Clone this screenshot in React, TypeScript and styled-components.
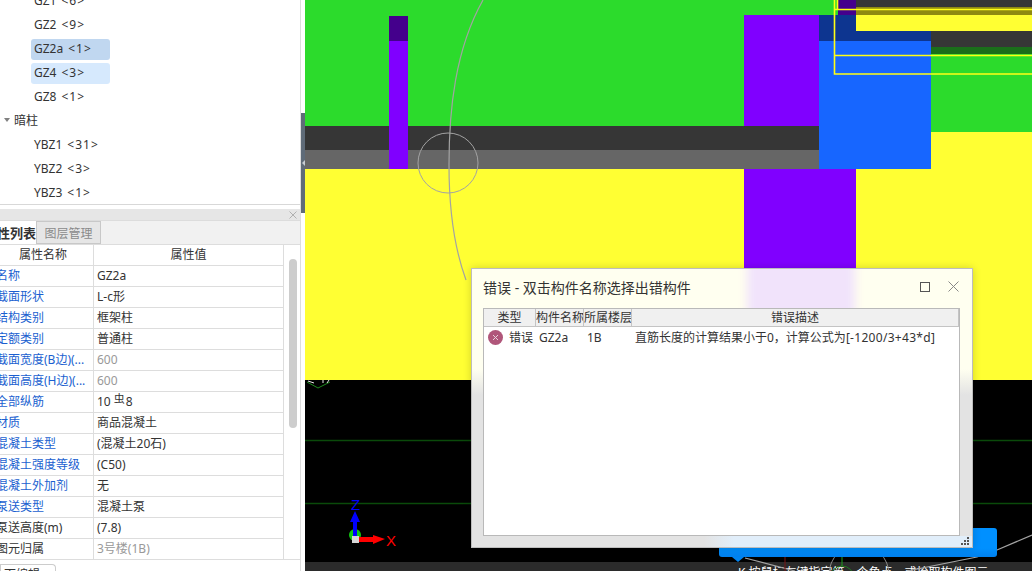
import React from "react";
import styled, { createGlobalStyle } from "styled-components";

const GlobalStyle = createGlobalStyle`
  html, body {
    margin: 0;
    padding: 0;
    background: #fff;
    overflow: hidden;
  }
`;

const Page = styled.div`
  position: relative;
  display: flex;
  width: 1032px;
  height: 571px;
  overflow: hidden;
  font-family: "Noto Sans", "Noto Sans CJK SC", sans-serif;
  font-size: 12px;
  color: #333;
`;

const LeftPanel = styled.div`
  display: flex;
  flex-direction: column;
  flex: none;
  width: 301px;
  border-right: 1px solid #ddd;
  box-sizing: border-box;
  overflow: hidden;
`;

const TreeBox = styled.div`
  flex: none;
  height: 205px;
  box-sizing: border-box;
  border-bottom: 1px solid #d8d8d8;
  overflow: hidden;
`;

const TreeList = styled.div`
  margin-top: -11px;
`;

const TreeRow = styled.div`
  display: flex;
  align-items: center;
  height: 24px;
  padding-left: 31px;
`;

const TreeItem = styled.div<{ $state?: "selected" | "hover" }>`
  display: flex;
  align-items: center;
  gap: 5px;
  width: 79px;
  height: 21px;
  box-sizing: border-box;
  padding: 0 0 2px 3px;
  border-radius: 3px;
  background: ${(p) =>
    p.$state === "selected" ? "#c0d7f0" : p.$state === "hover" ? "#d6e9fd" : "transparent"};
`;

const Count = styled.span`
  letter-spacing: 1px;
`;

const GroupRow = styled.div`
  display: flex;
  align-items: center;
  gap: 4px;
  height: 24px;
  box-sizing: border-box;
  padding: 0 0 2px 4px;
`;

const Caret = styled.span`
  width: 0;
  height: 0;
  border-left: 3.5px solid transparent;
  border-right: 3.5px solid transparent;
  border-top: 4px solid #808080;
`;

const PanelGrip = styled.div`
  display: flex;
  align-items: center;
  justify-content: flex-end;
  flex: none;
  height: 11px;
  margin-top: 4px;
  padding-right: 3px;
  background: #e6e6e6;
  border-bottom: 1px solid #dcdcdc;
`;

const TabBar = styled.div`
  display: flex;
  flex: none;
  height: 23px;
  margin-left: -17px;
  background: #f1f1f1;
  border-bottom: 1px solid #ddd;
`;

const Tab = styled.div<{ $active?: boolean }>`
  display: flex;
  align-items: center;
  justify-content: ${(p) => (p.$active ? "flex-end" : "center")};
  width: ${(p) => (p.$active ? "53px" : "65px")};
  font-size: ${(p) => (p.$active ? "13px" : "12px")};
  font-weight: ${(p) => (p.$active ? 700 : 400)};
  color: ${(p) => (p.$active ? "#333" : "#8a8a8a")};
  background: ${(p) => (p.$active ? "#fff" : "#e6e6e6")};
  border: ${(p) => (p.$active ? "none" : "1px solid #c8c8c8")};
  box-sizing: border-box;
  white-space: nowrap;
`;

const TableArea = styled.div`
  position: relative;
  flex: none;
  height: 314px;
  border-bottom: 1px solid #ddd;
  overflow: hidden;
`;

const PropGrid = styled.div`
  display: grid;
  grid-template-columns: 101px 190px;
  grid-auto-rows: 21px;
  margin-left: -7px;
  width: 291px;
`;

const HeadCell = styled.div`
  display: flex;
  align-items: center;
  justify-content: center;
  box-sizing: border-box;
  padding-bottom: 2px;
  border-right: 1px solid #ddd;
  border-bottom: 1px solid #ddd;
`;

const NameCell = styled.div<{ $plain?: boolean }>`
  display: flex;
  align-items: center;
  padding: 0 0 2px 3px;
  box-sizing: border-box;
  white-space: nowrap;
  overflow: hidden;
  color: ${(p) => (p.$plain ? "#333" : "#1a5fd0")};
  border-right: 1px solid #ddd;
  border-bottom: 1px solid #ddd;
`;

const ValueCell = styled.div<{ $muted?: boolean }>`
  display: flex;
  align-items: center;
  padding: 0 0 2px 3px;
  box-sizing: border-box;
  white-space: nowrap;
  color: ${(p) => (p.$muted ? "#999" : "#333")};
  border-right: 1px solid #ddd;
  border-bottom: 1px solid #ddd;
`;

const RebarMark = styled.span`
  font-size: 11px;
  margin: 0 1px 6px 3px;
`;

const ScrollThumb = styled.div`
  position: absolute;
  left: 289px;
  top: 14px;
  width: 8px;
  height: 169px;
  border-radius: 4px;
  background: #cdcdcd;
`;

const BottomTab = styled.div`
  flex: none;
  width: 56px;
  height: 13px;
  margin-top: 4px;
  box-sizing: border-box;
  border: 1px solid #ccc;
  border-bottom: none;
  border-radius: 0 4px 0 0;
  text-align: right;
  padding-right: 15px;
  line-height: 20px;
  overflow: hidden;
`;

const Splitter = styled.div`
  position: relative;
  flex: none;
  width: 4px;
  background: #fff;
`;

const SplitHandle = styled.div`
  display: flex;
  align-items: center;
  justify-content: center;
  position: absolute;
  top: 113px;
  left: 0;
  width: 4px;
  height: 100px;
  background: #5f6b78;
`;

const SplitArrow = styled.span`
  width: 0;
  height: 0;
  border-top: 3px solid transparent;
  border-bottom: 3px solid transparent;
  border-right: 3px solid #c6ccd2;
`;

const Viewport = styled.div`
  display: flex;
  flex-direction: column;
  flex: 1;
  min-width: 0;
  background: #000;
`;

const Drawing = styled.svg`
  display: block;
  flex: none;
  width: 727px;
  height: 562px;
`;

const StatusBar = styled.div`
  flex: 1;
  background: #2b2b2b;
  color: #fff;
  font-size: 12px;
  line-height: 16px;
  padding: 3px 0 0 433px;
  white-space: nowrap;
  overflow: hidden;
`;

const GuideOverlay = styled.svg`
  position: absolute;
  left: 305px;
  top: 0;
  width: 727px;
  height: 571px;
`;

const Hint = styled.div`
  position: absolute;
  left: 719px;
  top: 528px;
  width: 278px;
  height: 29px;
  border-radius: 3px;
  background: linear-gradient(to bottom, #0090ff 0, #0090ff 70%, #0080ee 100%);

  &::after {
    content: "";
    position: absolute;
    left: 13px;
    top: 29px;
    border-left: 6px solid transparent;
    border-right: 6px solid transparent;
    border-top: 5px solid #0084f0;
  }
`;

const Dialog = styled.div`
  position: absolute;
  left: 471px;
  top: 268px;
  display: flex;
  flex-direction: column;
  width: 502px;
  height: 280px;
  box-sizing: border-box;
  padding: 0 12px 11px 11px;
  border: 1px solid #bdbdbd;
  overflow: hidden;
  background: linear-gradient(to bottom, #fffff0 0, #fffff0 100px, #e3e3e3 126px, #e3e3e3 100%);
  box-shadow: 0 0 8px rgba(0, 0, 0, 0.18);
`;

const GlassPurple = styled.div`
  position: absolute;
  left: 275px;
  top: -8px;
  width: 108px;
  height: 56px;
  background: #f1e3fb;
  filter: blur(5px);
`;

const GlassBlue = styled.div`
  position: absolute;
  left: 0;
  right: 0;
  bottom: 0;
  height: 11px;
  background: linear-gradient(to right, #e3e3e3 0, #e3e3e3 232px, #e1eefa 262px, #e1eefa 100%);
`;

const TitleBar = styled.div`
  position: relative;
  display: flex;
  align-items: center;
  justify-content: space-between;
  flex: none;
  height: 39px;
  box-sizing: border-box;
  padding-bottom: 4px;
  font-size: 14px;
`;

const WindowButtons = styled.div`
  display: flex;
  align-items: center;
  gap: 18px;
  margin-right: 1px;
`;

const ListBox = styled.div`
  position: relative;
  flex: 1;
  border: 1px solid #b9b9b9;
  background: #fff;
`;

const ListRow = styled.div<{ $head?: boolean }>`
  display: grid;
  grid-template-columns: 52px 48px 48px 1fr;
  align-items: center;
  height: ${(p) => (p.$head ? "17px" : "20px")};
  background: ${(p) => (p.$head ? "#f0f0f0" : "transparent")};
  border-bottom: ${(p) => (p.$head ? "1px solid #c4c4c4" : "none")};
  white-space: nowrap;
`;

const ColHead = styled.div`
  height: 100%;
  line-height: 18px;
  text-align: center;
  border-right: 1px solid #c4c4c4;
  box-sizing: border-box;
  overflow: hidden;
`;

const ErrorKind = styled.div`
  display: flex;
  align-items: center;
  gap: 6px;
  padding-left: 4px;
`;

const ListCell = styled.div`
  padding-left: 3px;
`;

const Formula = styled.span`
  letter-spacing: 0.3px;
`;

const ResizeGrip = styled.svg`
  position: absolute;
  right: 2px;
  bottom: 1px;
  display: block;
`;

const CloseIcon = () => (
  <svg width="8" height="8" viewBox="0 0 8 8">
    <path d="M.5.5l7 7M7.500.5l-7 7" stroke="#b0b0b0" strokeWidth="1" fill="none" />
  </svg>
);

const trees = [
  { name: "GZ1", count: "<6>" },
  { name: "GZ2", count: "<9>" },
  { name: "GZ2a", count: "<1>", state: "selected" as const },
  { name: "GZ4", count: "<3>", state: "hover" as const },
  { name: "GZ8", count: "<1>" },
];

const hidden = [
  { name: "YBZ1", count: "<31>" },
  { name: "YBZ2", count: "<3>" },
  { name: "YBZ3", count: "<1>" },
];

const props: { name: string; value: React.ReactNode; plain?: boolean; muted?: boolean }[] = [
  { name: "名称", value: "GZ2a" },
  { name: "截面形状", value: "L-c形" },
  { name: "结构类别", value: "框架柱" },
  { name: "定额类别", value: "普通柱" },
  { name: "截面宽度(B边)(...", value: "600", muted: true },
  { name: "截面高度(H边)(...", value: "600", muted: true },
  {
    name: "全部纵筋",
    value: (
      <>
        10<RebarMark>虫</RebarMark>8
      </>
    ),
  },
  { name: "材质", value: "商品混凝土" },
  { name: "混凝土类型", value: "(混凝土20石)" },
  { name: "混凝土强度等级", value: "(C50)" },
  { name: "混凝土外加剂", value: "无" },
  { name: "泵送类型", value: "混凝土泵" },
  { name: "泵送高度(m)", value: "(7.8)", plain: true },
  { name: "图元归属", value: "3号楼(1B)", plain: true, muted: true },
];

const App = () => {
  return (
    <>
      <GlobalStyle />
      <Page>
        <LeftPanel>
          <TreeBox>
            <TreeList>
              {trees.map((t) => (
                <TreeRow key={t.name}>
                  <TreeItem $state={t.state}>
                    <span>{t.name}</span>
                    <Count>{t.count}</Count>
                  </TreeItem>
                </TreeRow>
              ))}
              <GroupRow>
                <Caret />
                <span>暗柱</span>
              </GroupRow>
              {hidden.map((t) => (
                <TreeRow key={t.name}>
                  <TreeItem>
                    <span>{t.name}</span>
                    <Count>{t.count}</Count>
                  </TreeItem>
                </TreeRow>
              ))}
            </TreeList>
          </TreeBox>
          <PanelGrip>
            <CloseIcon />
          </PanelGrip>
          <TabBar>
            <Tab $active>属性列表</Tab>
            <Tab>图层管理</Tab>
          </TabBar>
          <TableArea>
            <PropGrid>
              <HeadCell>属性名称</HeadCell>
              <HeadCell>属性值</HeadCell>
              {props.map((p) => (
                <React.Fragment key={p.name}>
                  <NameCell $plain={p.plain}>{p.name}</NameCell>
                  <ValueCell $muted={p.muted}>{p.value}</ValueCell>
                </React.Fragment>
              ))}
            </PropGrid>
            <ScrollThumb />
          </TableArea>
          <BottomTab>面编辑</BottomTab>
        </LeftPanel>
        <Splitter>
          <SplitHandle>
            <SplitArrow />
          </SplitHandle>
        </Splitter>
        <Viewport>
          <Drawing viewBox="305 0 727 562">
            <rect x="305" y="0" width="727" height="126" fill="#2cdb2c" />
            <rect x="931" y="54" width="101" height="78" fill="#2cdb2c" />
            <rect x="305" y="126" width="514" height="24" fill="#363636" />
            <rect x="305" y="150" width="514" height="19" fill="#666" />
            <rect x="305" y="169" width="727" height="211" fill="#ffff33" />
            <rect x="389" y="16" width="19" height="25" fill="#44008c" />
            <rect x="389" y="41" width="19" height="128" fill="#8000ff" />
            <rect x="744" y="15" width="75" height="111" fill="#8000ff" />
            <rect x="744" y="169" width="112" height="211" fill="#8000ff" />
            <rect x="819" y="15" width="37" height="26" fill="#0d3590" />
            <rect x="856" y="31" width="75" height="10" fill="#0d3590" />
            <rect x="819" y="41" width="112" height="128" fill="#1766ff" />
            <rect x="838" y="0" width="18" height="15" fill="#44008c" />
            <rect x="856" y="0" width="176" height="7" fill="#363636" />
            <rect x="856" y="7" width="176" height="8" fill="#8f8a10" />
            <rect x="856" y="15" width="176" height="16" fill="#ffff33" />
            <rect x="931" y="31" width="101" height="16" fill="#363636" />
            <rect x="931" y="47" width="101" height="7" fill="#1a6e1a" />
            <rect x="931" y="132" width="101" height="37" fill="#ffff33" />
            <path
              d="M834.500 0V74H1032M834.500 55.500H1032M837.500 0V9M834.500 9.500H1032"
              fill="none"
              stroke="#ffff14"
              strokeWidth="1.6"
            />
            <path d="M305 440.500H1032M305 503.500H1032" stroke="#0a4a0a" strokeWidth="1.3" />
            <path d="M483 0C455 50 449 110 449 165C449 210 455 250 466 280" fill="none" stroke="#a3a3a3" strokeWidth="1.2" />
            <circle cx="448" cy="163" r="30" fill="none" stroke="#a3a3a3" strokeWidth="1" />
            <path d="M307 382L318 388L330 382" fill="none" stroke="#1f8a1f" strokeWidth="1" />
            <path d="M308 381L314 383M323 380V383M329 380L327 383" fill="none" stroke="#e8e8e8" strokeWidth="1" />
            <circle cx="355" cy="535" r="6" fill="#12c912" />
            <path d="M353 536V522H350L355 511L360 522H357V536Z" fill="#0000ff" />
            <rect x="352" y="536" width="7" height="7" fill="#d6d6d6" />
            <path d="M359 537H373V535L385 539L373 544V542H359Z" fill="#ff0000" />
            <text x="351" y="510" fill="#0000ff" fontFamily="Liberation Sans" fontSize="15">Z</text>
            <text x="386" y="546" fill="#ff0000" fontFamily="Liberation Sans" fontSize="15">X</text>
          </Drawing>
          <StatusBar>K 按鼠标左键指定第一个角点，或拾取构件图元</StatusBar>
        </Viewport>
        <GuideOverlay viewBox="305 0 727 571">
          <path d="M745 558L795 571M907 571L977 557L997 550L1032 535" fill="none" stroke="#a3a3a3" strokeWidth="1.2" />
          <path d="M785 557V571" stroke="#7a1515" strokeWidth="1" />
          <circle cx="859" cy="574.500" r="30" fill="none" stroke="#8a8a8a" strokeWidth="1" />
          <circle cx="842" cy="578" r="12" fill="none" stroke="#1f7a1f" strokeWidth="1" />
          <path d="M842 557V566" stroke="#1fa01f" strokeWidth="1" />
        </GuideOverlay>
        <Hint />
        <Dialog>
          <GlassPurple />
          <GlassBlue />
          <TitleBar>
            <span>错误 - 双击构件名称选择出错构件</span>
            <WindowButtons>
              <svg width="10" height="10" viewBox="0 0 10 10">
                <rect x=".5" y=".5" width="9" height="9" fill="none" stroke="#555" />
              </svg>
              <svg width="11" height="11" viewBox="0 0 11 11">
                <path d="M.5.5l10 10M10.500.5l-10 10" stroke="#888" fill="none" />
              </svg>
            </WindowButtons>
          </TitleBar>
          <ListBox>
            <ListRow $head>
              <ColHead>类型</ColHead>
              <ColHead>构件名称</ColHead>
              <ColHead>所属楼层</ColHead>
              <ColHead>错误描述</ColHead>
            </ListRow>
            <ListRow>
              <ErrorKind>
                <svg width="15" height="15" viewBox="0 0 15 15">
                  <circle cx="7.500" cy="7.500" r="7.500" fill="#b0567a" />
                  <path d="M5 5l5 5M10 5l-5 5" stroke="#e8d2dc" strokeWidth="1" />
                </svg>
                <span>错误</span>
              </ErrorKind>
              <ListCell>GZ2a</ListCell>
              <ListCell>1B</ListCell>
              <ListCell>
                直筋长度的计算结果小于0，计算公式为<Formula>[-1200/3+43*d]</Formula>
              </ListCell>
            </ListRow>
          </ListBox>
          <ResizeGrip width="10" height="10" viewBox="0 0 10 10">
            <path d="M7 1h2v2H7zM4 4h2v2H4zM7 4h2v2H7zM1 7h2v2H1zM4 7h2v2H4zM7 7h2v2H7z" fill="#555" />
          </ResizeGrip>
        </Dialog>
      </Page>
    </>
  );
};

export default App;
